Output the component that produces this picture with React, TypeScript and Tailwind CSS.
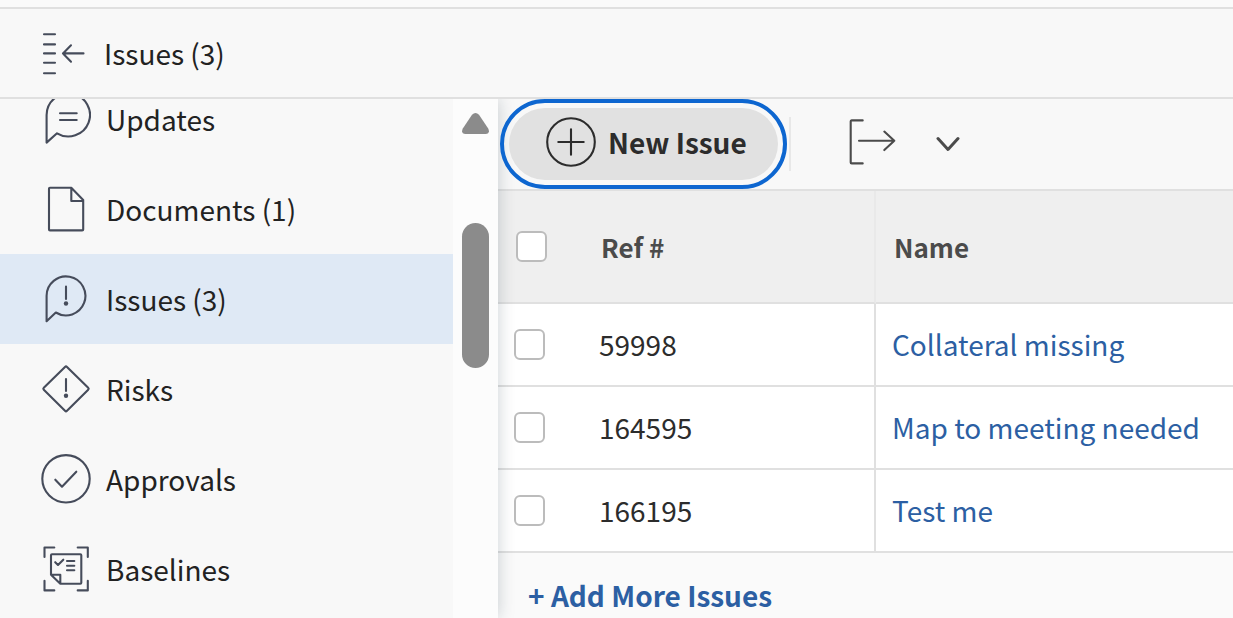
import type { ReactNode } from "react";

function Icon({ children, className = "" }: { children: ReactNode; className?: string }) {
  return (
    <svg
      viewBox="0 0 50 50"
      className={`size-[50px] shrink-0 ${className}`}
      fill="none"
      stroke="currentColor"
      strokeWidth="2.1"
      strokeLinecap="round"
      strokeLinejoin="round"
      aria-hidden="true"
    >
      {children}
    </svg>
  );
}

const navItems: { label: string; active?: boolean; icon: ReactNode }[] = [
  {
    label: "Updates",
    icon: <path d="M5.6 48.6V21A21.7 21.5 0 1 1 16 39.3ZM19 19.3H35.7M19 26H35.7" />,
  },
  {
    label: "Documents (1)",
    icon: <path d="M9 3.7H30.3L42.2 16V45.5Q42.2 46.4 41.2 46.4H9Q8 46.4 8 45.4V4.7Q8 3.7 9 3.7ZM30.3 3.7V17H42.2" />,
  },
  {
    label: "Issues (3)",
    active: true,
    icon: (
      <>
        <path d="M5.6 47.2V21.8A19.4 19.5 0 1 1 14.8 38.5ZM25 12.5V25" />
        <circle cx="25" cy="29.5" r="2.2" fill="currentColor" stroke="none" />
      </>
    ),
  },
  {
    label: "Risks",
    icon: (
      <>
        <path d="M24 2.9Q25 1.9 26 2.9L47.2 23.8Q48.2 24.8 47.2 25.8L26 46.8Q25 47.8 24 46.8L2.8 25.8Q1.8 24.8 2.8 23.8ZM25 15V27" />
        <circle cx="25" cy="31.7" r="2.2" fill="currentColor" stroke="none" />
      </>
    ),
  },
  {
    label: "Approvals",
    icon: (
      <>
        <circle cx="25" cy="24.8" r="23.7" />
        <path d="M14.3 25.7L21 32.7L35.3 17.7" />
      </>
    ),
  },
  {
    label: "Baselines",
    icon: (
      <path d="M3.5 13V3.5H13.3M36.7 3.5H46.8V13M3.5 36.7V46.4H13.3M36.7 46.4H46.8V36.7M10 11.3Q10 10.3 11 10.3H39.3Q40.3 10.3 40.3 11.3V38.7Q40.3 39.7 39.3 39.7H19.3L10 30.7ZM10 30.7H19.3V39.7M14.2 18.2L17 21L22.3 15.7M26 17H33.3M26 21.7H33.3M26 26.2H33.3" />
    ),
  },
];

const issues = [
  { ref: "59998", name: "Collateral missing" },
  { ref: "164595", name: "Map to meeting needed" },
  { ref: "166195", name: "Test me" },
];

function Checkbox({ label }: { label: string }) {
  return (
    <input
      type="checkbox"
      aria-label={label}
      className="block size-[31px] appearance-none rounded-md border-2 border-[#bcbcbc] bg-white checked:bg-[#2c5fa3]"
    />
  );
}

export default function App() {
  return (
    <div className="flex h-screen flex-col overflow-hidden bg-[#fafafa] font-['Noto_Sans_CJK_SC','Noto_Sans',sans-serif] text-[28px] leading-9 text-[#222]">
      <header className="mt-[7px] flex h-[92px] shrink-0 items-center gap-[13px] border-y-2 border-[#e0e0e0] bg-[#f8f8f8] pl-[41px]">
        <button type="button" aria-label="Collapse navigation" className="text-[#464c5b]">
          <Icon>
            <path d="M3 6.3H14M3 16.4H14M3 25.4H14M3 34.8H14M3 45.2H14M22 25.4H42.5M30 17.3L22 25.4L30 33.7" />
          </Icon>
        </button>
        <h1>Issues (3)</h1>
      </header>

      <div className="flex min-h-0 flex-1">
        <aside className="z-10 flex w-[498px] shrink-0 overflow-hidden bg-[#fcfcfc] shadow-[0_0_16px_rgba(20,40,60,0.22)] [clip-path:inset(0_-20px_0_0)]">
          <nav aria-label="Project" className="min-w-0 flex-1 overflow-hidden bg-[#f8f8f8]">
            <ul className="-mt-[25px]">
              {navItems.map((item) => (
                <li key={item.label}>
                  <a
                    href="#"
                    aria-current={item.active ? "page" : undefined}
                    className={`flex h-[90px] items-center gap-[15px] pl-[41px] ${item.active ? "bg-[#dfe9f5]" : ""}`}
                  >
                    <Icon className="text-[#464c5b]">{item.icon}</Icon>
                    {item.label}
                  </a>
                </li>
              ))}
            </ul>
          </nav>
          <div className="flex w-[45px] shrink-0 flex-col items-center pt-[14px]" aria-hidden="true">
            <svg viewBox="0 0 27 21" className="h-[21px] w-[27px] shrink-0" fill="#8b8b8b">
              <path d="M10 1.8Q13.5-1.8 17 1.8L26.2 15.5Q28.5 20.8 23.5 21H3.5Q-1.5 20.8.8 15.5Z" />
            </svg>
            <div className="mt-[89px] h-[145px] w-[27px] shrink-0 rounded-full bg-[#8b8b8b]" />
          </div>
        </aside>

        <main className="min-w-0 flex-1">
          <div className="flex h-[92px] items-center border-b-2 border-[#e0e0e0] bg-[#f8f8f8] pl-[11px]">
            <button
              type="button"
              className="z-20 flex h-[72px] shrink-0 items-center gap-3 rounded-full bg-[#e1e1e1] pr-[31px] pb-1 pl-[37px] font-bold text-[#2c2c2c] outline-4 outline-offset-5 outline-[#0d66d0]"
            >
              <Icon>
                <circle cx="25" cy="25" r="23.8" />
                <path d="M12.3 25H37.7M25 12.3V37.7" />
              </Icon>
              New Issue
            </button>
            <div className="ml-[11px] h-[54px] w-0.5 bg-[#e8e8e8]" />
            <button type="button" aria-label="Export" className="ml-[57px] flex items-center gap-[38px] text-[#4b4b4b]">
              <Icon>
                <path d="M14.7 1.4H3.7Q2.7 1.4 2.7 2.4V43.4Q2.7 44.4 3.7 44.4H14.7M11 21.8H46.3M36.3 12.6L46.3 21.8L36.3 31.1" />
              </Icon>
              <svg viewBox="0 0 24 16" className="h-4 w-6" fill="none" stroke="currentColor" strokeWidth="3" strokeLinecap="round" strokeLinejoin="round" aria-hidden="true">
                <path d="M2 2.5L12 13.5L22 2.5" />
              </svg>
            </button>
          </div>

          <table className="w-full table-fixed border-separate border-spacing-0 text-left">
            <colgroup>
              <col className="w-[85px]" />
              <col className="w-[293px]" />
              <col />
            </colgroup>
            <thead className="bg-[#efefef] text-[26px] text-[#4b4b4b]">
              <tr className="h-[113px]">
                <th className="border-b-2 border-[#e0e0e0] pl-[18px]">
                  <Checkbox label="Select all issues" />
                </th>
                <th className="border-r-2 border-b-2 border-r-[#e9e9e9] border-b-[#e0e0e0] pl-[18px] font-bold">Ref #</th>
                <th className="border-b-2 border-[#e0e0e0] pl-[18px] font-bold">Name</th>
              </tr>
            </thead>
            <tbody className="bg-white">
              {issues.map((issue) => (
                <tr key={issue.ref} className="h-[83px]">
                  <td className="border-b-2 border-[#e0e0e0] pl-4">
                    <Checkbox label={`Select issue ${issue.ref}`} />
                  </td>
                  <td className="border-r-2 border-b-2 border-[#e0e0e0] pb-0.5 pl-4 text-[#2c2c2c]">{issue.ref}</td>
                  <td className="border-b-2 border-[#e0e0e0] pb-0.5 pl-4">
                    <a href="#" className="text-[#2c5fa3]">{issue.name}</a>
                  </td>
                </tr>
              ))}
            </tbody>
          </table>

          <div className="pt-6 pl-[30px]">
            <button type="button" className="font-bold text-[#2c5fa3]">+ Add More Issues</button>
          </div>
        </main>
      </div>
    </div>
  );
}
